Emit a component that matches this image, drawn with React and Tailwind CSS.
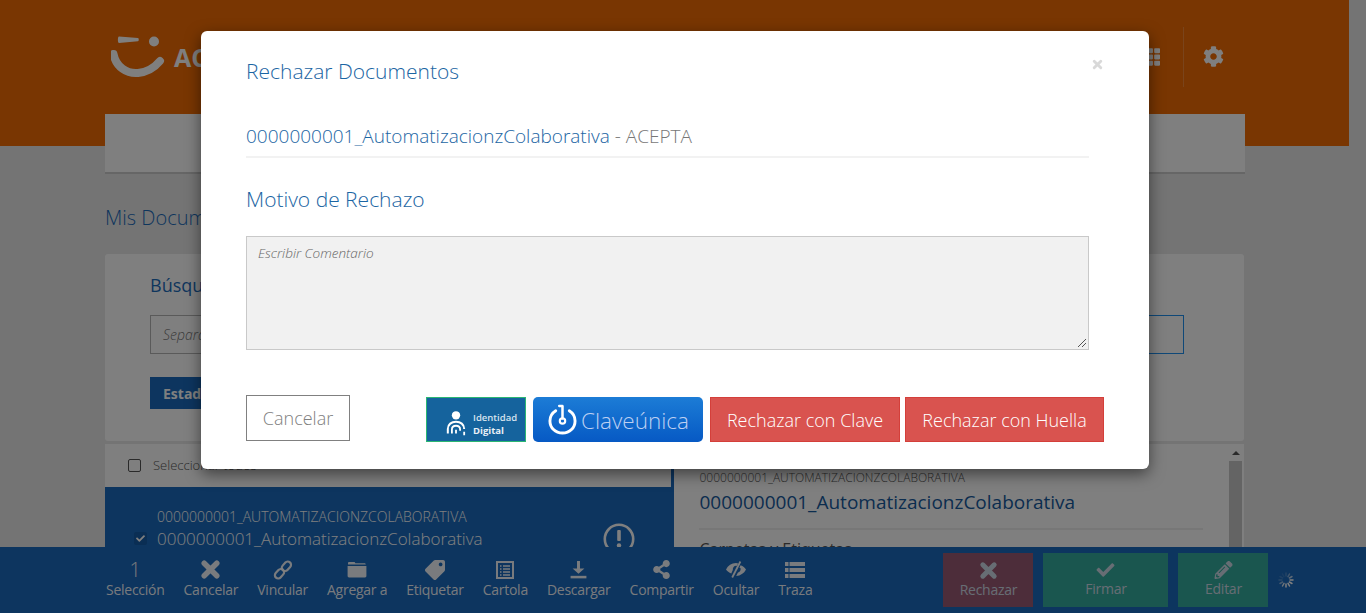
import React from "react";
import { FaTag, FaShareAlt, FaCheck, FaPencilAlt, FaCog, FaTh } from "react-icons/fa";

const XIcon = ({ className }) => (
  <svg viewBox="0 0 20 20" className={className} fill="none" stroke="currentColor" strokeWidth="5.2" strokeLinecap="round">
    <path d="M4 4 L16 16 M16 4 L4 16" />
  </svg>
);
const LinkIcon = ({ className }) => (
  <svg viewBox="0 0 20 20" className={className} fill="none" stroke="currentColor" strokeWidth="2.2">
    <rect x="10.2" y="1" width="6.5" height="10.5" rx="3.2" transform="rotate(42 13.4 6.2)" />
    <rect x="3.2" y="8.5" width="6.5" height="10.5" rx="3.2" transform="rotate(42 6.5 13.8)" />
  </svg>
);
const FolderIcon = ({ className }) => (
  <svg viewBox="0 0 20 17" className={className} fill="currentColor">
    <path d="M1 2.2 C1 1.4 1.5 1 2.2 1 H7 C7.7 1 8 1.5 8.4 2.2 H17.5 C18.2 2.2 18.7 2.7 18.8 3.4 H1 Z" />
    <path d="M.6 5 H19.4 V15 C19.4 15.8 18.8 16.4 18 16.4 H2 C1.2 16.4 .6 15.8 .6 15 Z" />
  </svg>
);
const DownloadIcon = ({ className }) => (
  <svg viewBox="0 0 18 18" className={className} fill="currentColor">
    <path d="M7.6 1 H10.4 V8 H14.6 L9 13 L3.4 8 H7.6 Z" />
    <rect x="1.5" y="15" width="15" height="2.4" />
  </svg>
);
const EyeOffIcon = ({ className }) => (
  <svg viewBox="0 0 22 18" className={className} fill="currentColor">
    <path d="M1 9 C3 5 6.5 2.8 11 2.6 L13.2 2.9 L11.9 5.4 C9.5 4.9 7.6 6.8 7.8 9.4 L6.3 13 C4 12 2.2 10.7 1 9 Z" />
    <path d="M15.6 4.8 C18 5.9 19.9 7.2 21 9 C19 13 15.5 15.2 11.2 15.4 L12.8 12.2 C14.6 11.7 15.9 10 15.6 8 C15.6 7.8 15.5 7.6 14.4 7 Z" />
    <path d="M14.6 .6 L16.2 1.4 L8 17.4 L6.4 16.6 Z" />
  </svg>
);
const CartolaIcon = ({ className }) => (
  <svg viewBox="0 0 18 18" className={className} fill="none" stroke="currentColor">
    <rect x="1" y="1" width="16" height="16" strokeWidth="2" />
    <path d="M4 5 H5.5 M7 5 H14 M4 8 H5.5 M7 8 H14 M4 11 H5.5 M7 11 H14 M4 14 H5.5 M7 14 H14" strokeWidth="1.6" />
  </svg>
);
const TrazaIcon = ({ className }) => (
  <svg viewBox="0 0 20 18" className={className} fill="currentColor">
    <rect x="0" y="1" width="3.5" height="4" /><rect x="4.5" y="1" width="15.5" height="4" />
    <rect x="0" y="7" width="3.5" height="4" /><rect x="4.5" y="7" width="15.5" height="4" />
    <rect x="0" y="13" width="3.5" height="4" /><rect x="4.5" y="13" width="15.5" height="4" />
  </svg>
);
const Spinner = () => (
  <svg viewBox="0 0 16 16" className="w-[16px] h-[16px]" stroke="#ffffff" strokeWidth="1.5" strokeLinecap="round">
    <path d="M8 1V4" opacity=".2" />
    <path d="M11.5 2 L10 4.6" opacity=".45" />
    <path d="M14 4.5 L11.4 6" opacity=".7" />
    <path d="M15 8H12" />
    <path d="M14 11.5 L11.4 10" />
    <path d="M11.5 14 L10 11.4" />
    <path d="M8 15V12" />
    <path d="M4.5 14 L6 11.4" opacity=".85" />
    <path d="M2 11.5 L4.6 10" opacity=".5" />
    <path d="M1 8H4" opacity=".25" />
    <path d="M2 4.5 L4.6 6" opacity=".15" />
    <path d="M4.5 2 L6 4.6" opacity=".1" />
  </svg>
);

const tools = [
  { label: "Selección", text: "1" },
  { label: "Cancelar", Icon: XIcon, size: "w-[21px] h-[21px]" },
  { label: "Vincular", Icon: LinkIcon, size: "w-[20px] h-[20px]" },
  { label: "Agregar a", Icon: FolderIcon, size: "w-[20px] h-[17px]" },
  { label: "Etiquetar", Icon: FaTag, size: "w-[20px] h-[20px] -scale-x-100" },
  { label: "Cartola", Icon: CartolaIcon, size: "w-[18px] h-[18px]" },
  { label: "Descargar", Icon: DownloadIcon, size: "w-[19px] h-[19px]" },
  { label: "Compartir", Icon: FaShareAlt, size: "w-[19px] h-[19px]" },
  { label: "Ocultar", Icon: EyeOffIcon, size: "w-[22px] h-[19px]" },
  { label: "Traza", Icon: TrazaIcon, size: "w-[20px] h-[18px]" },
];

const Tool = ({ label, text, Icon, size }) => (
  <div className="flex flex-col items-center text-white/95">
    <div className="h-[23px] flex items-center justify-center">
      {text ? <span className="text-[20px] font-light leading-[23px]">{text}</span> : <Icon className={size} />}
    </div>
    <span className="text-[14px] leading-[18px] tracking-[-0.26px]">{label}</span>
  </div>
);

const ActionBtn = ({ Icon, label, bg, w, size }) => (
  <div className={`${w} ${bg} h-[54px] pb-[2px] flex flex-col items-center justify-center text-[#cfdbe8]`}>
    <Icon className={size} />
    <span className="text-[14px] leading-[17px] mt-[1px] tracking-[-0.26px]">{label}</span>
  </div>
);

export default function App() {
  return (
    <div className="relative w-[1366px] h-[613px] overflow-hidden bg-[#e8e8e8] font-['Open_Sans',sans-serif]">
      <header className="w-[1349px] h-[146px] bg-[#f26c04] pl-[105px] pr-[104px]">
        <div className="h-[114px] flex items-center relative">
          <svg viewBox="0 0 56 46" className="w-[56px] h-[46px] ml-[6px] mt-[1px] text-white" fill="currentColor">
            <path d="M8 1.5 L27 3 C28 3.2 28 6 27 6.3 L8 8 C6.5 8 6.5 1.6 8 1.5 Z" />
            <circle cx="43" cy="6.5" r="5" />
            <path d="M2.5 19 C5 32 16 39 27 38 C37 37 44 32 49 26" fill="none" stroke="currentColor" strokeWidth="8" strokeLinecap="round" />
          </svg>
          <span className="ml-[7px] text-[25px] font-bold text-white leading-none">AC</span>
          <FaTh className="w-[20px] h-[20px] text-white ml-auto mr-[23px]" />
          <div className="w-px h-[60px] bg-white/20" />
          <FaCog className="w-[21px] h-[21px] text-white ml-[19px] mr-[21px] mt-[-2px]" />
        </div>
        <nav className="h-[60px] bg-white border-b-[2px] border-[#cdcdcd]" />
      </header>

      <main className="w-[1349px] px-[105px]">
        <h2 className="mt-[57px] text-[20px] leading-[30px] font-light text-[#1c6cbb]">Mis Documentos</h2>
        <section className="mt-[21px] h-[187px] bg-white rounded-[3px] pl-[45px] pr-[60px] pt-[18px]">
          <h3 className="text-[18px] leading-[26px] text-[#1c6cbb]">Búsqueda</h3>
          <div className="mt-[17px] flex h-[39px]">
            <div className="flex-1 border border-[#b5b5b5] text-[14px] italic font-light text-[#777] pl-[12px] flex items-center">Separa</div>
            <div className="w-[300px] border border-[#1e90f0]" />
          </div>
          <div className="mt-[23px] w-[120px] h-[32px] bg-[#1a6bbf] text-white font-bold text-[14px] pl-[13px] flex items-center">Estado</div>
        </section>

        <section className="mt-[3px] flex h-[103px]">
          <div className="w-[570px] border-r-[3px] border-[#1a6bbf]">
            <div className="h-[43px] bg-white flex items-center pl-[23px]">
              <span className="w-[13px] h-[13px] rounded-[2px] border border-[#555] bg-white" />
              <span className="ml-[12px] text-[13px] font-light text-[#555]">Seleccionar todos</span>
            </div>
            <div className="h-[60px] bg-[#1a6bbf] flex pl-[29px] relative">
              <span className="mt-[45px] w-[13px] h-[13px] rounded-[2px] bg-[#145ca8] flex items-center justify-center">
                <FaCheck className="w-[9px] h-[9px] text-white" />
              </span>
              <div className="ml-[10px] mt-[21px] text-white">
                <div className="text-[14px] leading-[18px] font-light">0000000001_AUTOMATIZACIONZCOLABORATIVA</div>
                <div className="text-[17px] leading-[23px] mt-[1px] font-light">0000000001_AutomatizacionzColaborativa</div>
              </div>
              <svg viewBox="0 0 32 32" className="absolute left-[498px] top-[36px] w-[32px] h-[32px] text-white">
                <circle cx="16" cy="16" r="14.2" fill="none" stroke="currentColor" strokeWidth="2.6" />
                <rect x="14.2" y="7" width="3.6" height="11" rx="1" fill="currentColor" />
                <circle cx="16" cy="22.5" r="2.2" fill="currentColor" />
              </svg>
            </div>
          </div>
          <div className="w-[553px] bg-white pl-[25px] pr-[24px] pt-[26px]">
            <div className="text-[12px] leading-[16px] font-light text-[#555]">0000000001_AUTOMATIZACIONZCOLABORATIVA</div>
            <div className="text-[19px] leading-[26px] mt-[3px] text-[#175a9e]">0000000001_AutomatizacionzColaborativa</div>
            <div className="mt-[13px] h-[2px] bg-[#eee]" />
            <div className="mt-[8px] text-[16px] leading-[22px] text-[#555]">Carpetas y Etiquetas</div>
          </div>
          <div className="w-[17px] bg-white flex flex-col items-center">
            <div className="h-[17px] flex items-center justify-center">
              <div className="border-x-[4px] border-x-transparent border-b-[4px] border-b-[#555]" />
            </div>
            <div className="w-[13px] flex-1 bg-[#c9c9c9]" />
          </div>
        </section>
      </main>

      <div className="absolute left-0 right-0 bottom-0 h-[66px] bg-[#1a6abe] flex items-center pl-[106px]">
        <div className="flex gap-[19px] mt-[-3px]">
          {tools.map((t) => <Tool key={t.label} {...t} />)}
        </div>
        <div className="flex gap-[10px] ml-[131px]">
          <ActionBtn Icon={XIcon} label="Rechazar" bg="bg-[#9b5a74]" w="w-[90px]" size="w-[19px] h-[19px]" />
          <ActionBtn Icon={FaCheck} label="Firmar" bg="bg-[#34ac9e]" w="w-[125px]" size="w-[21px] h-[18px]" />
          <ActionBtn Icon={FaPencilAlt} label="Editar" bg="bg-[#34ac9e]" w="w-[90px]" size="w-[19px] h-[18px]" />
        </div>
        <div className="ml-[10px]"><Spinner /></div>
      </div>

      <div className="absolute inset-0 bg-black/50" />

      <div role="dialog" className="absolute left-[201px] top-[31px] w-[948px] h-[438px] bg-white rounded-[6px] shadow-[0_5px_15px_rgba(0,0,0,0.5)] pl-[45px] pt-[25px]">
        <XIcon className="absolute right-[46px] top-[28px] w-[11px] h-[11px] text-[#d9d9d9]" />
        <h4 className="text-[21px] leading-[30px] font-light text-[#1b65a3]">Rechazar Documentos</h4>
        <div className="mt-[36px] w-[843px] h-[36px] border-b-[2px] border-[#f2f2f2] text-[19px] leading-[28px] font-light text-[#1b65a3]">
          0000000001_AutomatizacionzColaborativa <span className="text-[#777]">- ACEPTA</span>
        </div>
        <h4 className="mt-[26px] text-[21px] leading-[30px] font-light text-[#1b65a3]">Motivo de Rechazo</h4>
        <div className="relative mt-[22px] w-[843px] h-[114px] bg-[#f1f1f1] border border-[#c9c9c9] pl-[11px] py-[6px] text-[13.5px] leading-[20px] italic font-light text-[#666]">
          Escribir Comentario
          <svg viewBox="0 0 10 10" className="absolute right-[1px] bottom-[1px] w-[10px] h-[10px]" stroke="#555" strokeWidth="1">
            <path d="M1 9 L9 1 M5 9 L9 5" />
          </svg>
        </div>
        <div className="mt-[45px] flex items-start">
          <div className="w-[104px] h-[46px] border border-[#808080] flex items-center justify-center text-[18px] font-light text-[#808080]">Cancelar</div>
          <div className="ml-[76px] mt-[2px] flex">
            <div className="w-[100px] h-[45px] bg-[#15639d] border border-[#2bb673] flex items-center pl-[19px] pt-[8px] text-white">
              <svg viewBox="0 0 22 28" className="w-[20px] h-[27px]" fill="none" stroke="currentColor">
                <circle cx="11" cy="5" r="4.6" fill="currentColor" stroke="none" />
                <path d="M2 25 V20 C2 15 6 12 11 12 C16 12 20 15 20 20" strokeWidth="2.2" />
                <path d="M6.5 25 V20.5 C6.5 18 8.5 16.5 11 16.5 C13.5 16.5 15.5 18 15.5 20.5 V22" strokeWidth="2" />
                <path d="M11 21 V25 M20 23 V27" strokeWidth="2" />
              </svg>
              <div className="ml-[7px] text-[9.5px] leading-[13px]">
                <div className="font-semibold text-[#d7e4ef]">Identidad</div>
                <div className="font-bold text-[#e8f0f6]">Digital</div>
              </div>
            </div>
            <div className="ml-[7px] w-[170px] h-[45px] rounded-[5px] bg-gradient-to-b from-[#1c7cd6] to-[#0759c4] flex items-center pl-[15px]">
              <svg viewBox="0 0 30 32" className="w-[29px] h-[31px] text-white" fill="none" stroke="currentColor" strokeLinecap="round">
                <path d="M8 7 C4 9.5 2 13 2 17.5 C2 24.5 7.5 30 15 30 C22.5 30 28 24.5 28 17.5 C28 13 26 9.5 22 7" strokeWidth="3" />
                <path d="M15 3 V15" strokeWidth="2.6" />
                <path d="M11.5 2 H15" strokeWidth="2.4" />
                <circle cx="15" cy="17.5" r="2.8" strokeWidth="2.2" />
              </svg>
              <span className="ml-[4px] mt-[3px] text-[22.5px] font-light text-[#bdd0f2] leading-none">Claveúnica</span>
            </div>
            <div className="ml-[7px] w-[190px] h-[45px] pt-[2px] bg-[#d9534f] border border-[#d43f3a] flex items-center justify-center text-[18px] font-light text-white">Rechazar con Clave</div>
            <div className="ml-[5px] w-[199px] h-[45px] pt-[2px] bg-[#d9534f] border border-[#d43f3a] flex items-center justify-center text-[18px] font-light text-white">Rechazar con Huella</div>
          </div>
        </div>
      </div>
    </div>
  );
}
